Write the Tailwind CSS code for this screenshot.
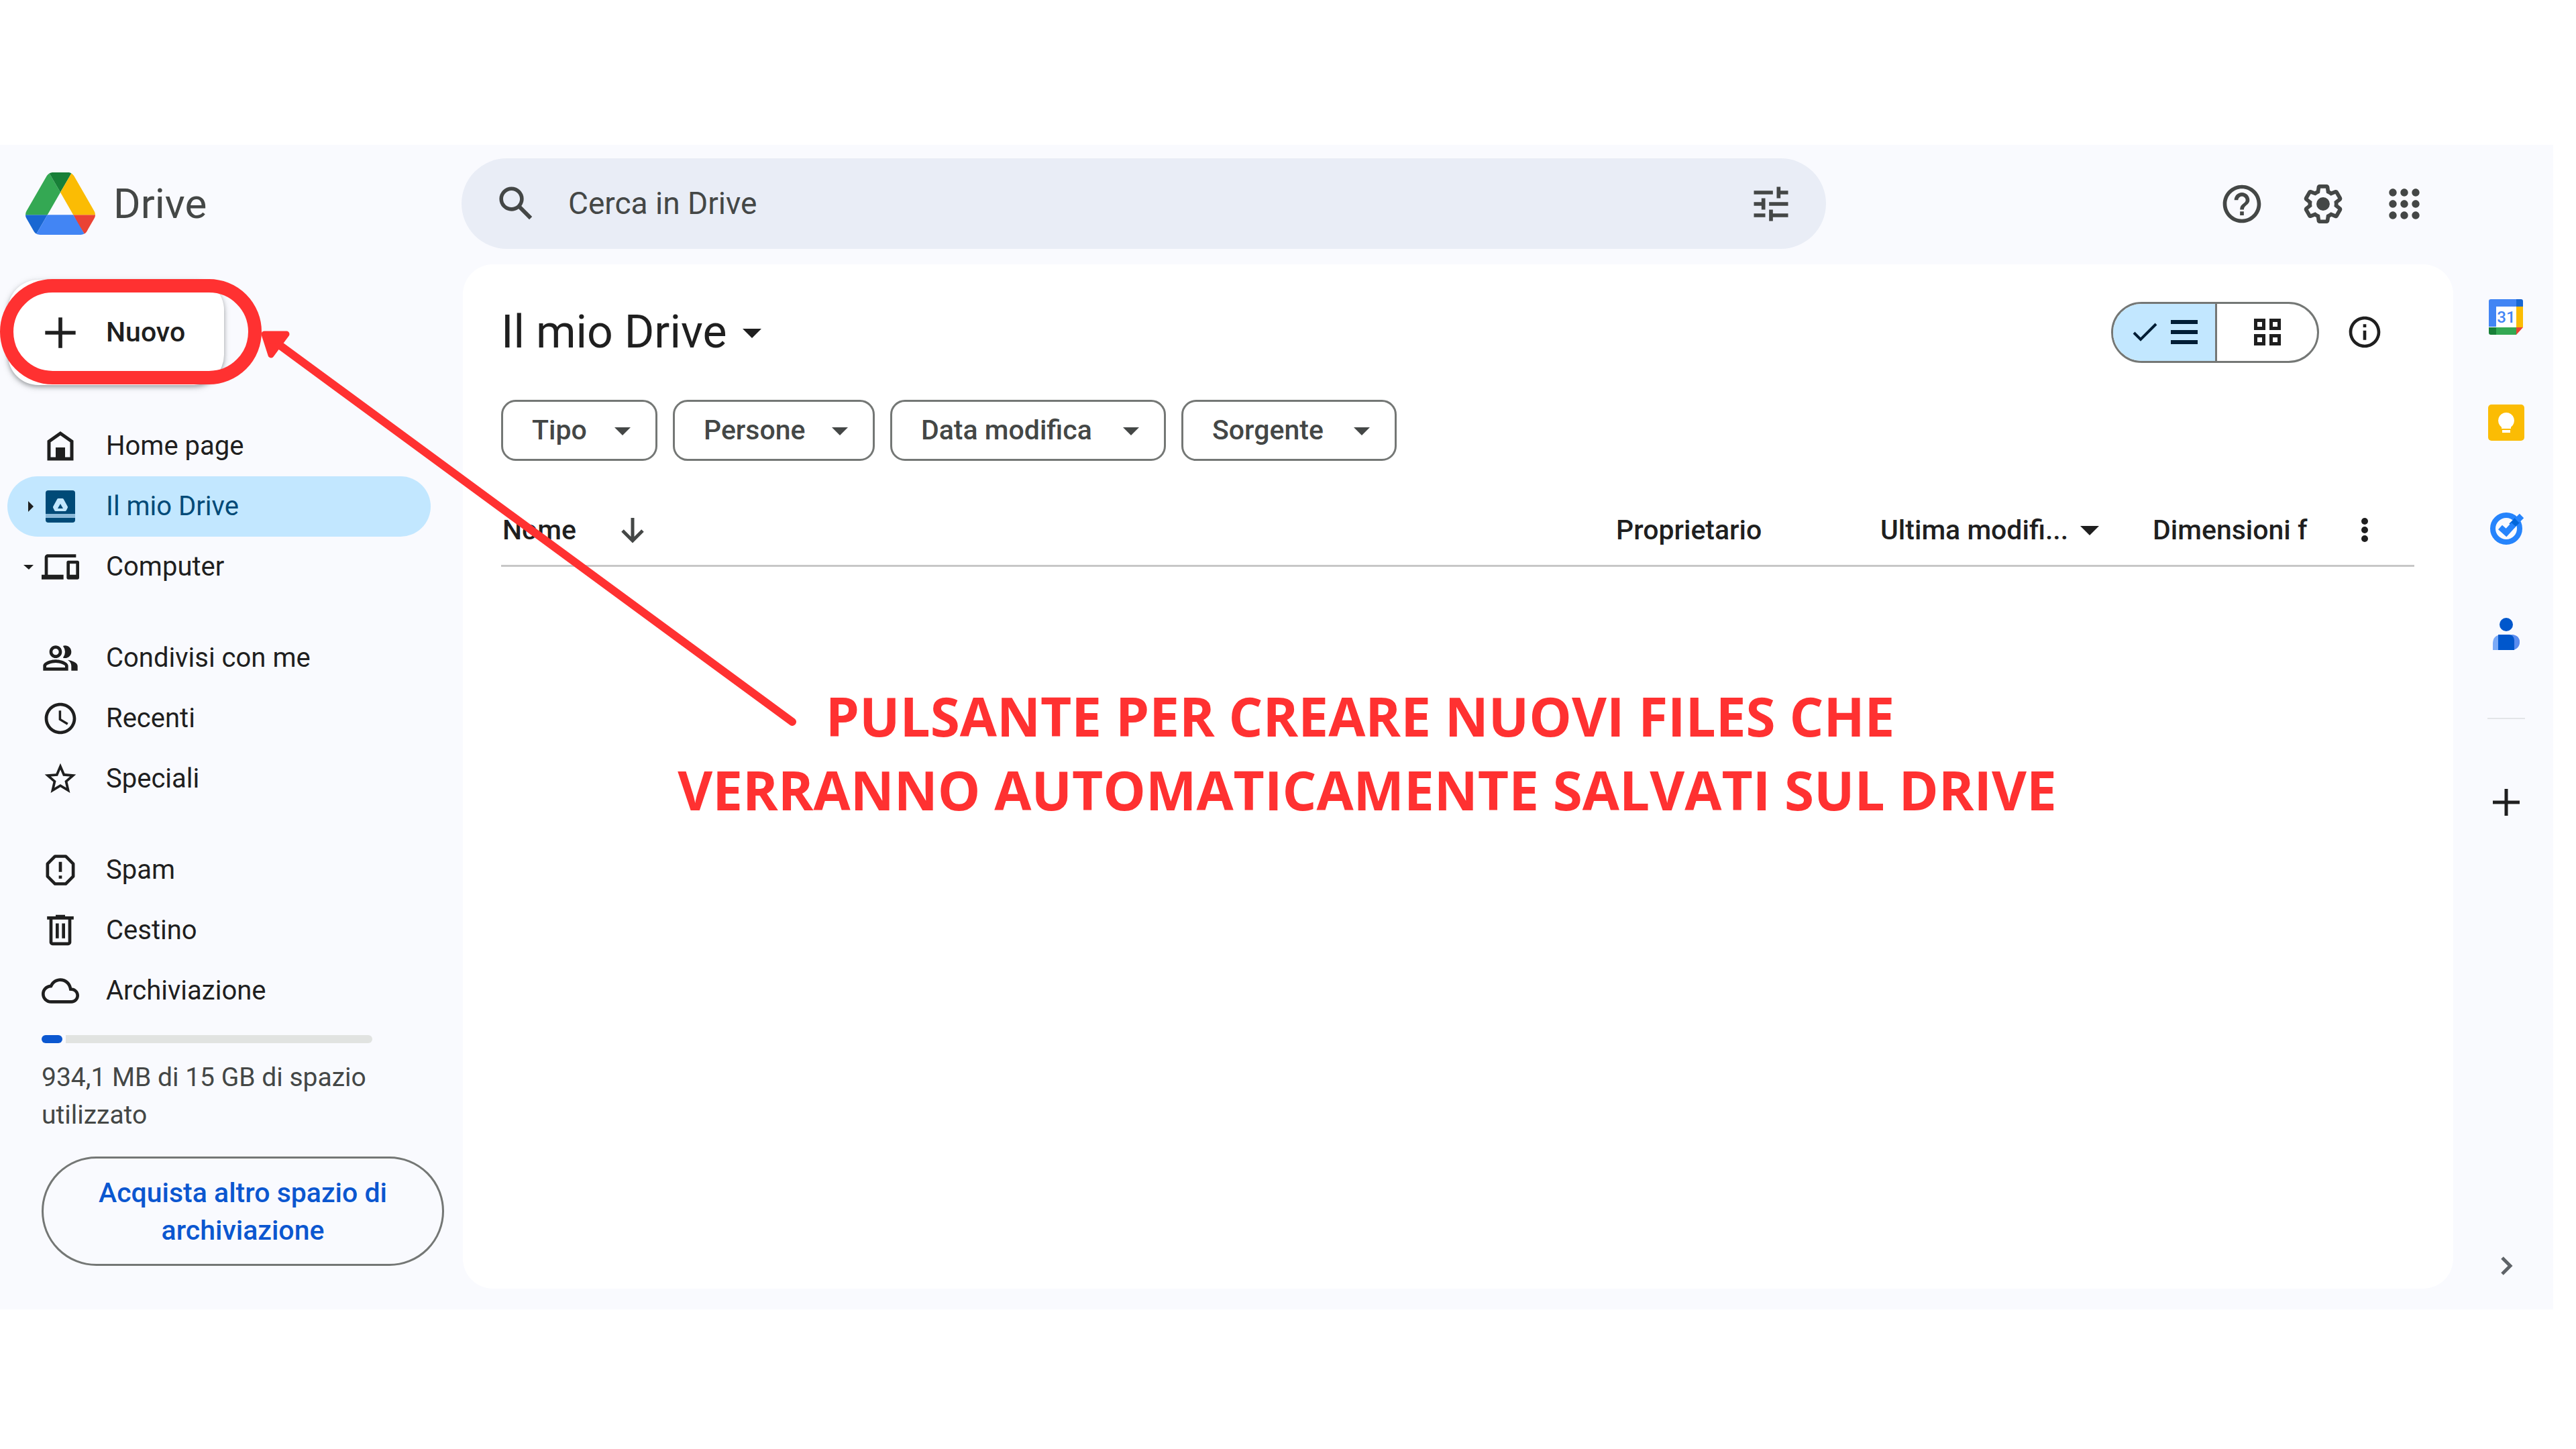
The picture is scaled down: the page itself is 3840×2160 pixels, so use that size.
<!DOCTYPE html>
<html lang="it">
<head>
<meta charset="utf-8">
<title>Il mio Drive - Google Drive</title>
<script src="https://cdn.jsdelivr.net/npm/@tailwindcss/browser@4"></script>
</head>
<body class="relative min-h-screen bg-white pt-[216px] font-['Roboto',sans-serif] text-[40px] text-[#1f1f1f]">

<div class="mr-[34px] flex min-h-[1736px] flex-col bg-[#f9fafe]">

  <!-- Top bar -->
  <header class="flex h-[178px] items-center pb-[3px]">
    <a href="#" class="flex w-[688px] items-center gap-[27px] pl-[38px] text-[62px] text-[#444746]">
      <svg class="h-[93px] w-[104px]" viewBox="0 0 87.3 78" preserveAspectRatio="none">
        <path fill="#1967d2" d="M6.6 66.85l3.85 6.65c.8 1.4 1.95 2.5 3.3 3.3L27.5 53H0c0 1.55.4 3.1 1.2 4.5z"/>
        <path fill="#34a853" d="M43.65 25L29.9 1.2c-1.35.8-2.5 1.9-3.3 3.3L1.2 48.5A9.06 9.06 0 000 53h27.5z"/>
        <path fill="#ea4335" d="M73.55 76.8c1.35-.8 2.5-1.9 3.3-3.3l1.6-2.75 7.65-13.25c.8-1.4 1.2-2.95 1.2-4.5H59.8l5.85 11.5z"/>
        <path fill="#188038" d="M43.65 25L57.4 1.2C56.05.4 54.5 0 52.9 0H34.4c-1.6 0-3.15.45-4.5 1.2z"/>
        <path fill="#4285f4" d="M59.8 53H27.5L13.75 76.8c1.35.8 2.9 1.2 4.5 1.2h50.8c1.6 0 3.15-.45 4.5-1.2z"/>
        <path fill="#fbbc04" d="M73.4 26.5L60.7 4.5c-.8-1.4-1.95-2.5-3.3-3.3L43.65 25 59.8 53h27.45c0-1.55-.4-3.1-1.2-4.5z"/>
      </svg>
      <span>Drive</span>
    </a>
    <form class="flex h-[135px] flex-1 items-center rounded-full bg-[#e9edf6] pr-12 pl-12 text-[#444746]">
      <button type="button" aria-label="Cerca">
        <svg class="size-[67px]" viewBox="0 0 24 24" fill="currentColor"><path d="M20.49 19l-5.73-5.73C15.53 12.2 16 10.91 16 9.5A6.5 6.5 0 109.5 16c1.41 0 2.7-.47 3.77-1.24L19 20.49 20.49 19zM5 9.5C5 7.01 7.01 5 9.5 5S14 7.01 14 9.5 11.99 14 9.5 14 5 11.99 5 9.5z"/></svg>
      </button>
      <input type="text" aria-label="Cerca in Drive" placeholder="Cerca in Drive" class="ml-11 min-w-0 flex-1 bg-transparent text-[46px] outline-none placeholder:text-[#444746]">
      <button type="button" aria-label="Ricerca avanzata">
        <svg class="size-[68px]" viewBox="0 0 24 24" fill="currentColor"><path d="M3 17v2h6v-2H3zM3 5v2h10V5H3zm10 16v-2h8v-2h-8v-2h-2v6h2zM7 9v2H3v2h4v2h2V9H7zm14 4v-2H11v2h10zm-6-4h2V7h4V5h-4V3h-2v6z"/></svg>
      </button>
    </form>
    <div class="flex w-[1084px] justify-end gap-[53px] pr-[188px] text-[#444746]">
      <button aria-label="Assistenza"><svg class="size-[68px]" viewBox="0 0 24 24" fill="currentColor"><path d="M11 18h2v-2h-2v2zm1-16C6.48 2 2 6.48 2 12s4.48 10 10 10 10-4.48 10-10S17.52 2 12 2zm0 18c-4.41 0-8-3.59-8-8s3.59-8 8-8 8 3.59 8 8-3.59 8-8 8zm0-14c-2.21 0-4 1.79-4 4h2c0-1.1.9-2 2-2s2 .9 2 2c0 2-3 1.75-3 5h2c0-2.25 3-2.5 3-5 0-2.21-1.79-4-4-4z"/></svg></button>
      <button aria-label="Impostazioni"><svg class="size-[68px]" viewBox="0 0 24 24" fill="currentColor"><path d="M13.85 22.25h-3.7c-.74 0-1.36-.54-1.45-1.27l-.27-1.89c-.27-.14-.53-.29-.79-.46l-1.8.72c-.7.26-1.47-.03-1.81-.65L2.2 15.53c-.35-.66-.2-1.44.36-1.88l1.53-1.19c-.01-.15-.02-.3-.02-.46 0-.15.01-.31.02-.46l-1.52-1.19c-.59-.45-.74-1.26-.37-1.88l1.85-3.19c.34-.62 1.11-.9 1.79-.63l1.81.73c.26-.17.52-.32.78-.46l.27-1.91c.09-.7.71-1.25 1.44-1.25h3.7c.74 0 1.36.54 1.45 1.27l.27 1.89c.27.14.53.29.79.46l1.8-.72c.71-.26 1.48.03 1.82.65l1.84 3.18c.36.66.2 1.44-.36 1.88l-1.52 1.19c.01.15.02.3.02.46s-.01.31-.02.46l1.52 1.19c.56.45.72 1.23.37 1.86l-1.86 3.22c-.34.62-1.11.9-1.8.63l-1.8-.72c-.26.17-.52.32-.78.46l-.27 1.91c-.1.68-.72 1.22-1.46 1.22zm-3.23-2h2.76l.37-2.55.53-.22c.44-.18.88-.44 1.34-.78l.45-.34 2.38.96 1.38-2.4-2.03-1.58.07-.56c.03-.26.06-.51.06-.78s-.03-.53-.06-.78l-.07-.56 2.03-1.58-1.39-2.4-2.39.96-.45-.35c-.42-.32-.87-.58-1.33-.77l-.52-.22-.37-2.55h-2.76l-.37 2.55-.53.21c-.44.19-.88.44-1.34.79l-.45.33-2.38-.95-1.39 2.39 2.03 1.58-.07.56a7 7 0 00-.06.79c0 .26.02.53.06.78l.07.56-2.03 1.58 1.38 2.4 2.39-.96.45.35c.43.33.86.58 1.33.77l.53.22.38 2.55z"/><circle cx="12" cy="12" r="3.5"/></svg></button>
      <button aria-label="App Google"><svg class="size-[68px]" viewBox="0 0 24 24" fill="currentColor"><path d="M6 8c1.1 0 2-.9 2-2s-.9-2-2-2-2 .9-2 2 .9 2 2 2zm6 12c1.1 0 2-.9 2-2s-.9-2-2-2-2 .9-2 2 .9 2 2 2zm-6 0c1.1 0 2-.9 2-2s-.9-2-2-2-2 .9-2 2 .9 2 2 2zm0-6c1.1 0 2-.9 2-2s-.9-2-2-2-2 .9-2 2 .9 2 2 2zm6 0c1.1 0 2-.9 2-2s-.9-2-2-2-2 .9-2 2 .9 2 2 2zm4-8c0 1.1.9 2 2 2s2-.9 2-2-.9-2-2-2-2 .9-2 2zm-4 2c1.1 0 2-.9 2-2s-.9-2-2-2-2 .9-2 2 .9 2 2 2zm6 6c1.1 0 2-.9 2-2s-.9-2-2-2-2 .9-2 2 .9 2 2 2zm0 6c1.1 0 2-.9 2-2s-.9-2-2-2-2 .9-2 2 .9 2 2 2z"/></svg></button>
    </div>
  </header>

  <div class="flex flex-1">

    <!-- Sidebar -->
    <aside class="w-[690px] shrink-0">
      <button class="mt-[23px] ml-3 flex h-[157px] w-[322px] items-center gap-[34px] rounded-[45px] bg-white pl-11 text-[41px] font-medium shadow-[0_3px_6px_rgba(60,64,67,0.4),0_3px_12px_rgba(60,64,67,0.15)]">
        <svg class="size-[68px]" viewBox="0 0 24 24" fill="currentColor"><path d="M20 13h-7v7h-2v-7H4v-2h7V4h2v7h7v2z"/></svg>
        Nuovo
      </button>

      <nav class="mt-[46px] ml-[11px] flex w-[631px] flex-col gap-[46px]">
        <ul>
          <li><a href="#" class="flex h-[90px] items-center gap-10 pl-[51px]">
            <svg class="size-14" viewBox="0 0 56 56"><path d="M11 47V21L28 9l17 12v26z" fill="none" stroke="currentColor" stroke-width="5"/><path d="M21 30h14v17H21z" fill="currentColor"/></svg>
            Home page</a></li>
          <li><a href="#" aria-current="page" class="flex h-[90px] items-center rounded-full bg-[#c2e7ff] pl-[17px] text-[#004a77]">
            <svg class="mr-[6px] h-14 w-7" viewBox="0 0 28 56"><path d="M14 20l8 8-8 8z" fill="#1f1f1f"/></svg>
            <svg class="mr-10 size-14" viewBox="0 0 56 56"><path d="M10 4h36a4 4 0 014 4v31H6V8a4 4 0 014-4z" fill="#004a77"/><path d="M6 39h44v6H6z" fill="#8ab9d8"/><path d="M6 45h44v3a4 4 0 01-4 4H10a4 4 0 01-4-4z" fill="#004a77"/><path d="M25 18h6l6 11-2 4H21l-2-4z" fill="#c2e7ff" stroke="#c2e7ff" stroke-width="4" stroke-linejoin="round"/><path d="M28 24l4 7h-8z" fill="#004a77"/></svg>
            Il mio Drive</a></li>
          <li><a href="#" class="flex h-[90px] items-center pl-[17px]">
            <svg class="mr-[6px] h-14 w-7" viewBox="0 0 28 56"><path d="M7 25h15l-7 7z" fill="#1f1f1f"/></svg>
            <svg class="mr-10 size-14" viewBox="0 0 24 24" fill="currentColor"><path d="M4 6h18V4H4c-1.1 0-2 .9-2 2v11H0v3h14v-3H4V6zm19 2h-6c-.55 0-1 .45-1 1v10c0 .55.45 1 1 1h6c.55 0 1-.45 1-1V9c0-.55-.45-1-1-1zm-1 9h-4v-7h4v7z"/></svg>
            Computer</a></li>
        </ul>
        <ul>
          <li><a href="#" class="flex h-[90px] items-center gap-10 pl-[51px]">
            <svg class="size-14" viewBox="0 0 24 24" fill="currentColor"><path d="M16.67 13.13C18.04 14.06 19 15.32 19 17v3h4v-3c0-2.18-3.57-3.47-6.33-3.87zM15 12c2.21 0 4-1.79 4-4s-1.79-4-4-4c-.47 0-.91.1-1.33.24a5.98 5.98 0 010 7.52c.42.14.86.24 1.33.24zm-6 0c2.21 0 4-1.79 4-4s-1.79-4-4-4-4 1.79-4 4 1.79 4 4 4zm0-6c1.1 0 2 .9 2 2s-.9 2-2 2-2-.9-2-2 .9-2 2-2zm0 7c-2.67 0-8 1.34-8 4v3h16v-3c0-2.66-5.33-4-8-4zm6 5H3v-.99C3.2 16.29 6.3 15 9 15s5.8 1.29 6 2v1z"/></svg>
            Condivisi con me</a></li>
          <li><a href="#" class="flex h-[90px] items-center gap-10 pl-[51px]">
            <svg class="size-14" viewBox="0 0 24 24" fill="currentColor"><path d="M11.99 2C6.47 2 2 6.48 2 12s4.47 10 9.99 10C17.52 22 22 17.52 22 12S17.52 2 11.99 2zM12 20c-4.42 0-8-3.58-8-8s3.58-8 8-8 8 3.58 8 8-3.58 8-8 8zm.5-13H11v6l5.25 3.15.75-1.23-4.5-2.67z"/></svg>
            Recenti</a></li>
          <li><a href="#" class="flex h-[90px] items-center gap-10 pl-[51px]">
            <svg class="size-14" viewBox="0 0 24 24" fill="currentColor"><path d="M22 9.24l-7.19-.62L12 2 9.19 8.63 2 9.24l5.46 4.73L5.82 21 12 17.27 18.18 21l-1.63-7.03L22 9.24zM12 15.4l-3.76 2.27 1-4.28-3.32-2.88 4.38-.38L12 6.1l1.71 4.04 4.38.38-3.32 2.88 1 4.28L12 15.4z"/></svg>
            Speciali</a></li>
        </ul>
        <ul>
          <li><a href="#" class="flex h-[90px] items-center gap-10 pl-[51px]">
            <svg class="size-14" viewBox="0 0 24 24" fill="none" stroke="currentColor" stroke-width="2"><path d="M8.6 3.2h6.8l4.8 4.8v8l-4.8 4.8H8.6L3.8 16V8z" stroke-linejoin="round"/><path d="M12 6.8v6.4M12 15.5v2"/></svg>
            Spam</a></li>
          <li><a href="#" class="flex h-[90px] items-center gap-10 pl-[51px]">
            <svg class="size-14" viewBox="0 0 24 24" fill="currentColor"><path d="M15 3V2H9v1H3.500v2H5v14.500c0 1.100.9 2 2 2h10c1.100 0 2-.9 2-2V5h1.500V3H15zm2 16.500H7V5h10v14.500zM9 7.500h2v9.500H9V7.500zm4 0h2v9.500h-2V7.500z"/></svg>
            Cestino</a></li>
          <li><a href="#" class="flex h-[90px] items-center gap-10 pl-[51px]">
            <svg class="size-14" viewBox="0 0 24 24" fill="currentColor"><path d="M19.35 10.04C18.67 6.59 15.64 4 12 4 9.11 4 6.6 5.64 5.35 8.04 2.34 8.36 0 10.91 0 14c0 3.31 2.69 6 6 6h13c2.76 0 5-2.24 5-5 0-2.64-2.05-4.78-4.65-4.96zM19 18H6c-2.21 0-4-1.79-4-4 0-2.05 1.53-3.76 3.56-3.97l1.07-.11.5-.95C8.08 7.14 9.94 6 12 6c2.62 0 4.88 1.86 5.39 4.43l.3 1.5 1.53.11c1.56.1 2.78 1.41 2.78 2.96 0 1.65-1.35 3-3 3z"/></svg>
            Archiviazione</a></li>
        </ul>
      </nav>

      <div class="mt-[21px] ml-[62px] w-[600px]">
        <div class="flex w-[493px] gap-[5px]">
          <div class="h-3 rounded-full bg-[#0b57d0]" style="width:6.3%"></div>
          <div class="h-3 flex-1 rounded-r-full bg-[#e1e3e1]"></div>
        </div>
        <p class="mt-[23px] w-[540px] text-[39px] leading-[56px] text-[#444746]">934,1 MB di 15 GB di spazio utilizzato</p>
        <button class="mt-[34px] h-[163px] w-full rounded-full border-3 border-[#747775] px-16 text-[41px] leading-[56px] font-medium text-[#0b57d0]">Acquista altro spazio di archiviazione</button>
      </div>
    </aside>

    <!-- File list -->
    <main class="mb-[31px] min-w-0 flex-1 rounded-[45px] bg-white pt-14 pr-[58px] pl-[57px]">
      <div class="flex h-[90px] items-center justify-between pr-[46px]">
        <h1><button class="flex items-center gap-[10px] text-[68px]">Il mio Drive
          <svg class="size-14" viewBox="0 0 56 56" fill="currentColor"><path d="M14 23h28L28 37z"/></svg></button></h1>
        <div class="flex items-center gap-10">
          <div class="flex h-[91px] w-[310px] overflow-hidden rounded-full border-3 border-[#747775]">
            <button aria-label="Layout elenco" class="flex w-[155px] items-center gap-1.5 border-r-3 border-[#747775] bg-[#c2e7ff] pl-6 text-[#001d35]">
              <svg class="size-12" viewBox="0 0 48 48" fill="none" stroke="currentColor" stroke-width="4"><path d="M7 25l10 10 23-23"/></svg>
              <svg class="size-14" viewBox="0 0 56 56" fill="currentColor"><path d="M8 10h40v6H8zM8 25h40v6H8zM8 40h40v6H8z"/></svg>
            </button>
            <button aria-label="Layout griglia" class="flex flex-1 items-center justify-center">
              <svg class="size-14" viewBox="0 0 56 56" fill="none" stroke="currentColor" stroke-width="5"><path d="M10.500 10.500h12v12h-12zM33.500 10.500h12v12h-12zM10.500 33.500h12v12h-12zM33.500 33.500h12v12h-12z"/></svg>
            </button>
          </div>
          <button aria-label="Visualizza dettagli"><svg class="size-14" viewBox="0 0 24 24" fill="currentColor"><path d="M11 7h2v2h-2zm0 4h2v6h-2zm1-9C6.480 2 2 6.480 2 12s4.480 10 10 10 10-4.480 10-10S17.520 2 12 2zm0 18c-4.410 0-8-3.590-8-8s3.590-8 8-8 8 3.590 8 8-3.590 8-8 8z"/></svg></button>
        </div>
      </div>

      <div class="mt-14 flex gap-[23px] text-[41px] font-medium text-[#444746]">
        <button class="flex h-[91px] w-[233px] items-center justify-between rounded-[22px] border-3 border-[#747775] pr-[21px] pl-[43px]">Tipo
          <svg class="size-14" viewBox="0 0 56 56" fill="currentColor"><path d="M16 23h24L28 35z"/></svg></button>
        <button class="flex h-[91px] w-[301px] items-center justify-between rounded-[22px] border-3 border-[#747775] pr-[21px] pl-[43px]">Persone
          <svg class="size-14" viewBox="0 0 56 56" fill="currentColor"><path d="M16 23h24L28 35z"/></svg></button>
        <button class="flex h-[91px] w-[411px] items-center justify-between rounded-[22px] border-3 border-[#747775] pr-[21px] pl-[43px]">Data modifica
          <svg class="size-14" viewBox="0 0 56 56" fill="currentColor"><path d="M16 23h24L28 35z"/></svg></button>
        <button class="flex h-[91px] w-[321px] items-center justify-between rounded-[22px] border-3 border-[#747775] pr-[21px] pl-[43px]">Sorgente
          <svg class="size-14" viewBox="0 0 56 56" fill="currentColor"><path d="M16 23h24L28 35z"/></svg></button>
      </div>

      <table class="mt-12 w-full table-fixed text-[41px]">
        <thead>
          <tr class="h-[108px] border-b-3 border-[#c7c7c7] text-left">
            <th scope="col" class="pt-1 pl-[2px] font-medium"><div class="flex items-center gap-14">Nome
              <button aria-label="Inverti ordinamento"><svg class="size-14" viewBox="0 0 56 56" fill="none" stroke="#444746" stroke-width="5"><path d="M28 10v34M13 29l15 15 15-15"/></svg></button></div></th>
            <th scope="col" class="w-[394px] pt-1 pl-[2px] font-medium">Proprietario</th>
            <th scope="col" class="w-[406px] pt-1 pl-[2px] font-medium"><button class="flex items-center gap-1">Ultima modifi...
              <svg class="size-14" viewBox="0 0 56 56" fill="currentColor"><path d="M14 22h28L28 36z"/></svg></button></th>
            <th scope="col" class="w-[233px] overflow-hidden pt-1 pl-[2px] font-medium whitespace-nowrap">Dimensioni f</th>
            <th scope="col" class="w-[159px] pt-1 pl-[57px]"><button aria-label="Altre opzioni" class="block"><svg class="size-14" viewBox="0 0 56 56" fill="currentColor"><circle cx="28" cy="15" r="5"/><circle cx="28" cy="28" r="5"/><circle cx="28" cy="41" r="5"/></svg></button></th>
          </tr>
        </thead>
      </table>
    </main>

    <!-- Side panel -->
    <aside class="flex w-[149px] shrink-0 flex-col items-center pt-[50px] pb-[37px] pl-2">
      <div class="flex flex-col gap-[102px]">
        <button aria-label="Calendar"><svg class="size-14" viewBox="0 0 56 56"><path d="M11 12h32v32H11z" fill="#fff"/><path d="M5 2h38v11H13v30H2V5a3 3 0 013-3z" fill="#4285f4"/><path d="M43 2h7a3 3 0 013 3v8H43z" fill="#1967d2"/><path d="M43 13h10v31H43z" fill="#fbbc04"/><path d="M2 44h11v11H5a3 3 0 01-3-3z" fill="#188038"/><path d="M13 44h30v11H13z" fill="#34a853"/><path d="M43 44h10L43 55z" fill="#ea4335"/><text x="28" y="37" font-family="Roboto, sans-serif" font-size="24" font-weight="500" text-anchor="middle" fill="#4285f4">31</text></svg></button>
        <button aria-label="Keep"><svg class="size-14" viewBox="0 0 56 56"><rect x="1" y="1" width="54" height="54" rx="5" fill="#fbbc04"/><path d="M28 13a12 12 0 00-7 21.700V37h14v-2.300A12 12 0 0028 13zM22 39h12v4H22z" fill="#fff"/></svg></button>
        <button aria-label="Tasks"><svg class="size-14" viewBox="0 0 56 56" fill="none"><circle cx="28" cy="28" r="20" stroke="#2684fc" stroke-width="8"/><path d="M36 24l9-9" stroke="#0066da" stroke-width="10"/><path d="M44 16l7-7" stroke="#2684fc" stroke-width="9"/><path d="M19 26l9 8 11-12" stroke="#2684fc" stroke-width="9"/></svg></button>
        <button aria-label="Contatti"><svg class="size-14" viewBox="0 0 56 56"><path d="M8 51V41c0-8 5-13 13-13h14c8 0 13 5 13 11s-5 12-12 12z" fill="#7baaf7"/><path d="M36 28c8 0 12 5 12 11s-4 12-12 12z" fill="#5b8def"/><path d="M16 51V28h16c5 0 8 4 8 9v14z" fill="#0057cc"/><circle cx="28" cy="13" r="10" fill="#0057cc"/></svg></button>
      </div>
      <hr class="mt-24 w-14 border-t-2 border-[#e3e5e8]">
      <button aria-label="Scarica componenti aggiuntivi" class="mt-24"><svg class="size-14" viewBox="0 0 56 56" fill="none" stroke="#1f1f1f" stroke-width="5"><path d="M8 28h40M28 8v40"/></svg></button>
      <button aria-label="Nascondi riquadro laterale" class="mt-auto"><svg class="size-14" viewBox="0 0 56 56" fill="none" stroke="#5f6368" stroke-width="5"><path d="M22 16l12 12-12 12"/></svg></button>
    </aside>
  </div>
</div>

<!-- Tutorial callout over the page -->
<div class="absolute top-[416px] left-0 h-[157px] w-[390px] rounded-full border-20 border-[#ff3131]"></div>
<svg class="pointer-events-none absolute top-[480px] left-[380px] h-[620px] w-[820px]" viewBox="380 480 820 620">
  <path d="M412 511L1181 1076" stroke="#ff3131" stroke-width="12" stroke-linecap="round"/>
  <path d="M394 498L427 498L404 529Z" fill="#ff3131" stroke="#ff3131" stroke-width="9" stroke-linejoin="round"/>
</svg>
<p class="absolute top-[1012px] left-[1002px] w-[2072px] text-center font-['Open_Sans',sans-serif] text-[80px] leading-[110px] font-bold text-[#ff3131]">PULSANTE PER CREARE NUOVI FILES CHE&nbsp;<br>VERRANNO AUTOMATICAMENTE SALVATI SUL DRIVE</p>

</body>
</html>
